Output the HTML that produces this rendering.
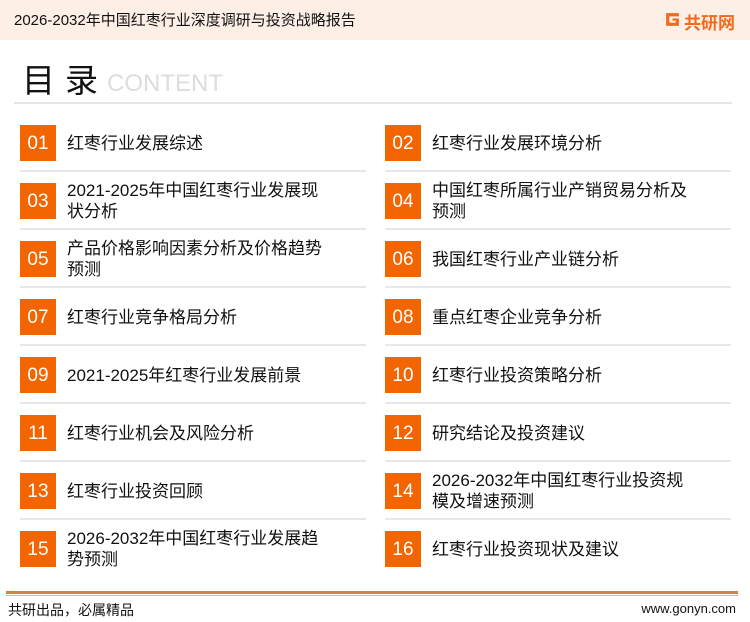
<!DOCTYPE html>
<html><head><meta charset="utf-8"><style>
*{margin:0;padding:0;box-sizing:border-box}
body{width:750px;height:622px;background:#fff;font-family:"Liberation Sans","Noto Sans CJK SC",sans-serif;position:relative;overflow:hidden;color:#111}
.hdr{position:absolute;left:0;top:0;width:750px;height:40px;background:#fdeee6}
.hdr .t{position:absolute;left:14px;top:9px;font-size:15px;color:#111}
.logo{position:absolute;left:664px;top:9px;font-size:17px;font-weight:bold;color:#f26a1b}
.logo svg{position:absolute;left:0;top:2px}
.mt{position:absolute;left:22px;top:59px;font-size:33px;line-height:44px;color:#111;letter-spacing:10px}
.ct{position:absolute;left:107px;top:70px;font-size:24px;color:#ddd}
.hl{position:absolute;left:14px;top:102px;width:718px;height:2px;background:#e6e6e6}
.box{position:absolute;width:36px;height:36px;background:#f26500;color:#fff;font-size:19px;text-align:center;line-height:38px}
.tx{position:absolute;font-size:17px;line-height:21px;width:266px}
.ln{position:absolute;height:2px;background:#e8e8e8;width:346px}
.fl1{position:absolute;left:6px;top:591px;width:732px;height:3px;background:#d9813f}
.fl2{position:absolute;left:6px;top:595px;width:732px;height:1px;background:#e8b592}
.ft{position:absolute;left:8px;top:600px;font-size:14px}
.fr{position:absolute;right:14px;top:601px;font-size:13px}
</style></head><body>
<div class="hdr"><div class="t">2026-2032年中国红枣行业深度调研与投资战略报告</div>
<div class="logo"><svg width="17" height="17" viewBox="0 0 16 16"><path d="M2 2h12v3H5v6h6V9H8V7h6v7H2z" fill="#f26a1b"/></svg><span style="margin-left:20px">共研网</span></div></div>
<div class="mt">目录</div><div class="ct">CONTENT</div>
<div class="hl"></div>

<div class="box" style="left:20px;top:125px">01</div><div class="tx" style="left:67px;top:133px">红枣行业发展综述</div>
<div class="box" style="left:385px;top:125px">02</div><div class="tx" style="left:432px;top:133px">红枣行业发展环境分析</div>
<div class="ln" style="left:20px;top:170px"></div><div class="ln" style="left:385px;top:170px"></div>

<div class="box" style="left:20px;top:183px">03</div><div class="tx" style="left:67px;top:180px">2021-2025年中国红枣行业发展现状分析</div>
<div class="box" style="left:385px;top:183px">04</div><div class="tx" style="left:432px;top:180px">中国红枣所属行业产销贸易分析及预测</div>
<div class="ln" style="left:20px;top:228px"></div><div class="ln" style="left:385px;top:228px"></div>

<div class="box" style="left:20px;top:241px">05</div><div class="tx" style="left:67px;top:238px">产品价格影响因素分析及价格趋势预测</div>
<div class="box" style="left:385px;top:241px">06</div><div class="tx" style="left:432px;top:249px">我国红枣行业产业链分析</div>
<div class="ln" style="left:20px;top:286px"></div><div class="ln" style="left:385px;top:286px"></div>

<div class="box" style="left:20px;top:299px">07</div><div class="tx" style="left:67px;top:307px">红枣行业竞争格局分析</div>
<div class="box" style="left:385px;top:299px">08</div><div class="tx" style="left:432px;top:307px">重点红枣企业竞争分析</div>
<div class="ln" style="left:20px;top:344px"></div><div class="ln" style="left:385px;top:344px"></div>

<div class="box" style="left:20px;top:357px">09</div><div class="tx" style="left:67px;top:365px">2021-2025年红枣行业发展前景</div>
<div class="box" style="left:385px;top:357px">10</div><div class="tx" style="left:432px;top:365px">红枣行业投资策略分析</div>
<div class="ln" style="left:20px;top:402px"></div><div class="ln" style="left:385px;top:402px"></div>

<div class="box" style="left:20px;top:415px">11</div><div class="tx" style="left:67px;top:423px">红枣行业机会及风险分析</div>
<div class="box" style="left:385px;top:415px">12</div><div class="tx" style="left:432px;top:423px">研究结论及投资建议</div>
<div class="ln" style="left:20px;top:460px"></div><div class="ln" style="left:385px;top:460px"></div>

<div class="box" style="left:20px;top:473px">13</div><div class="tx" style="left:67px;top:481px">红枣行业投资回顾</div>
<div class="box" style="left:385px;top:473px">14</div><div class="tx" style="left:432px;top:470px">2026-2032年中国红枣行业投资规模及增速预测</div>
<div class="ln" style="left:20px;top:518px"></div><div class="ln" style="left:385px;top:518px"></div>

<div class="box" style="left:20px;top:531px">15</div><div class="tx" style="left:67px;top:528px">2026-2032年中国红枣行业发展趋势预测</div>
<div class="box" style="left:385px;top:531px">16</div><div class="tx" style="left:432px;top:539px">红枣行业投资现状及建议</div>

<div class="fl1"></div><div class="fl2"></div>
<div class="ft">共研出品，必属精品</div><div class="fr">www.gonyn.com</div>
</body></html>
